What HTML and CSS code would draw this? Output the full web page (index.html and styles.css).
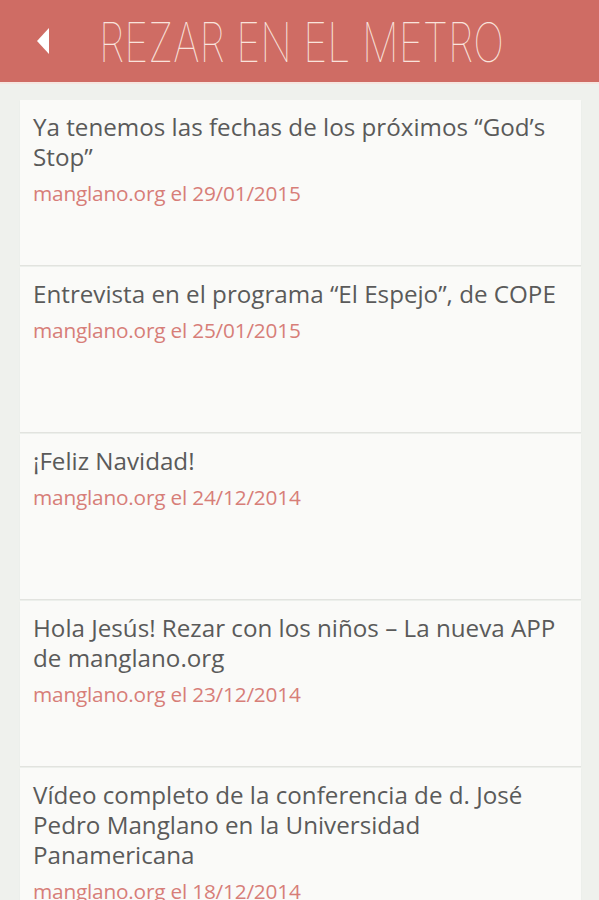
FILE: index.html
```html
<!DOCTYPE html>
<html lang="es">
<head>
<meta charset="utf-8">
<link rel="stylesheet" href="styles.css">
</head>
<body>
<header class="topbar">
  <svg class="back" width="14" height="30" viewBox="0 0 14 30"><path d="M13 2 L13 28 L1 15 Z" fill="#ffffff"/></svg>
  <h1 class="title">REZAR EN EL METRO</h1>
</header>
<main class="list">
  <article class="card">
    <h2 class="card-title">Ya tenemos las fechas de los próximos “God’s Stop”</h2>
    <p class="card-meta">manglano.org el 29/01/2015</p>
  </article>
  <article class="card">
    <h2 class="card-title">Entrevista en el programa “El Espejo”, de COPE</h2>
    <p class="card-meta">manglano.org el 25/01/2015</p>
  </article>
  <article class="card">
    <h2 class="card-title">¡Feliz Navidad!</h2>
    <p class="card-meta">manglano.org el 24/12/2014</p>
  </article>
  <article class="card">
    <h2 class="card-title">Hola Jesús! Rezar con los niños – La nueva APP de manglano.org</h2>
    <p class="card-meta">manglano.org el 23/12/2014</p>
  </article>
  <article class="card">
    <h2 class="card-title">Vídeo completo de la conferencia de d. José Pedro Manglano en la Universidad Panamericana</h2>
    <p class="card-meta">manglano.org el 18/12/2014</p>
  </article>
</main>
</body>
</html>
```
FILE: styles.css
```css
html, body {
  margin: 0;
  padding: 0;
}
body {
  width: 599px;
  height: 900px;
  overflow: hidden;
  background: #eff1ed;
  font-family: "Open Sans", "Noto Sans", sans-serif;
}
.topbar {
  height: 84px;
  background: #cf6c64;
  display: flex;
  align-items: center;
  box-sizing: border-box;
  padding-left: 36px;
  border-bottom: 2px solid #f6e6e0;
  overflow: hidden;
}
.back {
  display: block;
  flex: none;
}
.title {
  margin: 4px 0 0 49px;
  font-family: "Inter", "Lato", sans-serif;
  font-weight: 100;
  font-size: 54px;
  color: #f9e3dc;
  line-height: 1;
  white-space: nowrap;
  transform: scaleX(0.76);
  transform-origin: left center;
}
.list {
  padding: 16px 18px 0 20px;
  display: flex;
  flex-direction: column;
  gap: 2px;
}
.card {
  height: 165px;
  box-sizing: border-box;
  background: #fafaf8;
  padding: 12px 12px 0 13px;
  box-shadow: 0 1px 1px #e2e3df;
  flex: none;
}
.card-title {
  margin: 0;
  font-weight: 400;
  font-size: 24.2px;
  line-height: 30px;
  color: #5a5a5a;
}
.card-meta {
  margin: 6px 0 0;
  font-size: 20.8px;
  line-height: 30px;
  letter-spacing: -0.2px;
  color: #d77e78;
}
```
